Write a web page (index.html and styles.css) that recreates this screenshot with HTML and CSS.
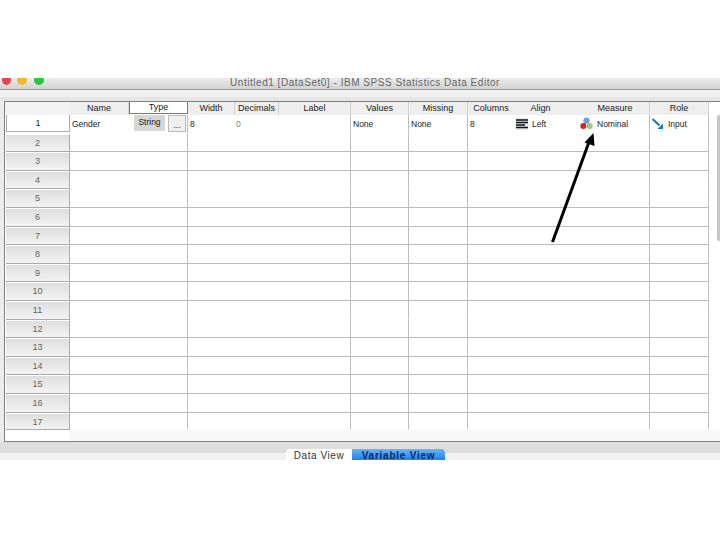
FILE: index.html
```html
<!DOCTYPE html>
<html lang="en">
<head>
<meta charset="utf-8">
<title>IBM SPSS Statistics Data Editor</title>
<link rel="stylesheet" href="styles.css">
</head>
<body>
<div class="page">
  <div class="window">
    <div class="titlebar">
      <div class="lights"><span class="light red"></span><span class="light yellow"></span><span class="light green"></span></div>
      <div class="title">Untitled1 [DataSet0] - IBM SPSS Statistics Data Editor</div>
    </div>
    <div class="toolstrip"></div>
    <div class="body">
      <div class="sheet">
        <div class="row head">
          <div class="num"></div>
          <div class="c c1">Name</div><div class="c c2 sel">Type</div><div class="c c3">Width</div><div class="c c4">Decimals</div><div class="c c5">Label</div><div class="c c6">Values</div><div class="c c7">Missing</div><div class="c c8">Columns</div><div class="c c9">Align</div><div class="c c10 measure">Measure</div><div class="c c11">Role</div>
        </div>
        <div class="row nl">
          <div class="num active">1</div>
          <div class="c c1 l">Gender</div>
          <div class="c c2 typecell"><span class="strval">String</span><span class="dots">...</span></div>
          <div class="c c3 l">8</div><div class="c c4 l dec">0</div><div class="c c5"></div><div class="c c6 l">None</div><div class="c c7 l">None</div><div class="c c8 l">8</div>
          <div class="c c9 l ic"><svg class="icon" viewBox="0 0 12 12"><rect width="12" height="12" fill="#dfe7f2"/><path d="M0 2h12M0 4.500h12M0 7h9M0 9.500h12" stroke="#111" stroke-width="1.300"/></svg>Left</div>
          <div class="c c10 l ic nominal"><svg class="icon wide" viewBox="0 0 14 14"><circle cx="7" cy="4" r="3.400" fill="#6aa5d8"/><circle cx="3.600" cy="9.700" r="3.300" fill="#d8232a"/><circle cx="10.400" cy="9.700" r="3.300" fill="#a4c97a"/></svg>Nominal</div>
          <div class="c c11 l ic"><svg class="icon" viewBox="0 0 12 12"><path d="M.5 1 7.500 7.500" stroke="#1e78c8" stroke-width="2.300" fill="none"/><path d="M11 11H5.500L11 5.500Z" fill="#1e78c8"/></svg>Input</div>
        </div>
        <div class="row"><div class="num">2</div><div class="c c1"></div><div class="c c2"></div><div class="c c3"></div><div class="c c4"></div><div class="c c5"></div><div class="c c6"></div><div class="c c7"></div><div class="c c8"></div><div class="c c9"></div><div class="c c10"></div><div class="c c11"></div></div>
        <div class="row"><div class="num">3</div><div class="c c1"></div><div class="c c2"></div><div class="c c3"></div><div class="c c4"></div><div class="c c5"></div><div class="c c6"></div><div class="c c7"></div><div class="c c8"></div><div class="c c9"></div><div class="c c10"></div><div class="c c11"></div></div>
        <div class="row nl"><div class="num">4</div><div class="c c1"></div><div class="c c2"></div><div class="c c3"></div><div class="c c4"></div><div class="c c5"></div><div class="c c6"></div><div class="c c7"></div><div class="c c8"></div><div class="c c9"></div><div class="c c10"></div><div class="c c11"></div></div>
        <div class="row"><div class="num">5</div><div class="c c1"></div><div class="c c2"></div><div class="c c3"></div><div class="c c4"></div><div class="c c5"></div><div class="c c6"></div><div class="c c7"></div><div class="c c8"></div><div class="c c9"></div><div class="c c10"></div><div class="c c11"></div></div>
        <div class="row"><div class="num">6</div><div class="c c1"></div><div class="c c2"></div><div class="c c3"></div><div class="c c4"></div><div class="c c5"></div><div class="c c6"></div><div class="c c7"></div><div class="c c8"></div><div class="c c9"></div><div class="c c10"></div><div class="c c11"></div></div>
        <div class="row"><div class="num">7</div><div class="c c1"></div><div class="c c2"></div><div class="c c3"></div><div class="c c4"></div><div class="c c5"></div><div class="c c6"></div><div class="c c7"></div><div class="c c8"></div><div class="c c9"></div><div class="c c10"></div><div class="c c11"></div></div>
        <div class="row"><div class="num">8</div><div class="c c1"></div><div class="c c2"></div><div class="c c3"></div><div class="c c4"></div><div class="c c5"></div><div class="c c6"></div><div class="c c7"></div><div class="c c8"></div><div class="c c9"></div><div class="c c10"></div><div class="c c11"></div></div>
        <div class="row"><div class="num">9</div><div class="c c1"></div><div class="c c2"></div><div class="c c3"></div><div class="c c4"></div><div class="c c5"></div><div class="c c6"></div><div class="c c7"></div><div class="c c8"></div><div class="c c9"></div><div class="c c10"></div><div class="c c11"></div></div>
        <div class="row"><div class="num">10</div><div class="c c1"></div><div class="c c2"></div><div class="c c3"></div><div class="c c4"></div><div class="c c5"></div><div class="c c6"></div><div class="c c7"></div><div class="c c8"></div><div class="c c9"></div><div class="c c10"></div><div class="c c11"></div></div>
        <div class="row nl"><div class="num">11</div><div class="c c1"></div><div class="c c2"></div><div class="c c3"></div><div class="c c4"></div><div class="c c5"></div><div class="c c6"></div><div class="c c7"></div><div class="c c8"></div><div class="c c9"></div><div class="c c10"></div><div class="c c11"></div></div>
        <div class="row"><div class="num">12</div><div class="c c1"></div><div class="c c2"></div><div class="c c3"></div><div class="c c4"></div><div class="c c5"></div><div class="c c6"></div><div class="c c7"></div><div class="c c8"></div><div class="c c9"></div><div class="c c10"></div><div class="c c11"></div></div>
        <div class="row"><div class="num">13</div><div class="c c1"></div><div class="c c2"></div><div class="c c3"></div><div class="c c4"></div><div class="c c5"></div><div class="c c6"></div><div class="c c7"></div><div class="c c8"></div><div class="c c9"></div><div class="c c10"></div><div class="c c11"></div></div>
        <div class="row"><div class="num">14</div><div class="c c1"></div><div class="c c2"></div><div class="c c3"></div><div class="c c4"></div><div class="c c5"></div><div class="c c6"></div><div class="c c7"></div><div class="c c8"></div><div class="c c9"></div><div class="c c10"></div><div class="c c11"></div></div>
        <div class="row"><div class="num">15</div><div class="c c1"></div><div class="c c2"></div><div class="c c3"></div><div class="c c4"></div><div class="c c5"></div><div class="c c6"></div><div class="c c7"></div><div class="c c8"></div><div class="c c9"></div><div class="c c10"></div><div class="c c11"></div></div>
        <div class="row"><div class="num">16</div><div class="c c1"></div><div class="c c2"></div><div class="c c3"></div><div class="c c4"></div><div class="c c5"></div><div class="c c6"></div><div class="c c7"></div><div class="c c8"></div><div class="c c9"></div><div class="c c10"></div><div class="c c11"></div></div>
        <div class="row last nl"><div class="num">17</div><div class="c c1"></div><div class="c c2"></div><div class="c c3"></div><div class="c c4"></div><div class="c c5"></div><div class="c c6"></div><div class="c c7"></div><div class="c c8"></div><div class="c c9"></div><div class="c c10"></div><div class="c c11"></div></div>
        <div class="foot"></div>
        <div class="thumb"></div>
      </div>
    </div>
    <div class="tabs"><span class="tab">Data View</span><span class="tab on">Variable View</span></div>
  </div>
  <svg class="arrow" viewBox="0 0 720 540"><path d="M552.500 242 589 142" stroke="#000" stroke-width="3" fill="none"/><path d="M593.500 133 594.500 146 584.500 142.500Z" fill="#000"/></svg>
</div>
</body>
</html>
```
FILE: styles.css
```css
*{box-sizing:border-box}
html,body{margin:0;padding:0;background:#fff}
.page{position:relative;width:720px;height:540px;overflow:hidden;padding-top:78px;font-family:"Liberation Sans",Arial,sans-serif;color:#333}
.window{width:720px;height:382px;display:flex;flex-direction:column;background:#ececec}
.titlebar{height:12px;flex:none;position:relative;overflow:hidden;background:linear-gradient(#ececec,#d2d2d2);border-bottom:1px solid #9a9a9a;display:flex;justify-content:center}
.lights{position:absolute;left:2px;top:-3px;display:flex;gap:7px}
.light{width:10px;height:10px;border-radius:50%}
.red{background:#e4464a;margin-right:-1px;width:9px}
.yellow{background:#f6b82a}
.green{background:#2ac53c}
.title{font-size:10px;line-height:9px;color:#666;letter-spacing:.53px;white-space:nowrap;padding-left:10px}
.toolstrip{height:11px;flex:none;background:linear-gradient(#f1f1f1 60%,#e6e6e6 60%)}
.body{height:341px;flex:none;padding-left:4px;display:flex}
.sheet{width:716px;position:relative;background:#fff;border:1px solid #7f7f7f;border-right:0;display:flex;flex-direction:column}
.row{display:flex;height:18.600px;flex:none;font-size:8.500px}
.head{height:13px;font-size:9px}
.num{width:64px;margin-left:1px;flex:none;background:linear-gradient(#dedede,#f3f3f3);border:1px solid #fff;border-right-color:#aaa;border-bottom-color:#aaa;border-left:0;text-align:center;line-height:16px;color:#666;font-size:9px}
.head .num{background:#f3f3f3;border:0;margin-left:0;width:65px}
.num.active{background:#fff;color:#222;border:1px solid #aaa;border-top:0;height:17px}
.c{flex:none;border-bottom:1px solid #bdbdbd;line-height:18px;white-space:nowrap}
.head .c{text-align:center;color:#222;line-height:13px;border-bottom:0;background:#eeeeee;border-right:1px solid #d4d4d4}
.nl .c{border-bottom-color:transparent}
.c1{width:59px}
.c2{width:59px;border-right:1px solid #bdbdbd}
.c3{width:47px}
.c4{width:44px}
.c5{width:72px;border-right:1px solid #bdbdbd}
.c6{width:58px;border-right:1px solid #bdbdbd}
.c7{width:59px;border-right:1px solid #bdbdbd}
.c8{width:46px}
.c9{width:53px}
.c10{width:83px;border-right:1px solid #bdbdbd}
.c11{width:59px;border-right:1px solid #bdbdbd}
.head .c8,.head .c9{border-right:0}
.head .measure{padding-left:14px}
.head .sel{background:#fff;border:1px solid #777;border-top:0;line-height:11px;height:12px}
.l{padding-left:2px;color:#222}
.dec{padding-left:1px;color:#777}
.typecell{position:relative}
.strval{position:absolute;left:5px;top:0;width:31px;height:16px;background:#d6d6d6;text-align:center;line-height:15px;color:#222}
.dots{position:absolute;left:39px;top:0;width:18px;height:17px;background:#f0f0f0;border:1px solid #bbb;text-align:center;line-height:19px;color:#222}
.ic{display:flex;align-items:center;gap:4px}
.icon{width:12px;height:12px;flex:none}
.icon.wide{width:13px;height:13px}
.nominal{padding-left:13px}
.last{height:17px}
.foot{flex:1;margin-left:65px;background:#f8f8f8}
.thumb{position:absolute;right:0;top:13px;width:3px;height:126px;background:#c6c6c6;border-radius:2px 0 0 2px}
.tabs{flex:1;display:flex;justify-content:center;align-items:flex-end;background:linear-gradient(#dedede 11px,#f1f1f1 11px);padding-left:11px;font-size:10px}
.tab{height:11px;width:66px;background:#fff;text-align:center;line-height:14px;border-radius:4px 0 0 0;color:#333;letter-spacing:.55px}
.tab.on{width:93px;background:linear-gradient(#6bb4f6,#1b83f0);color:#102a66;font-weight:bold;border-radius:0 4px 0 0;letter-spacing:.75px}
.arrow{position:absolute;left:0;top:0;width:720px;height:540px}
```
